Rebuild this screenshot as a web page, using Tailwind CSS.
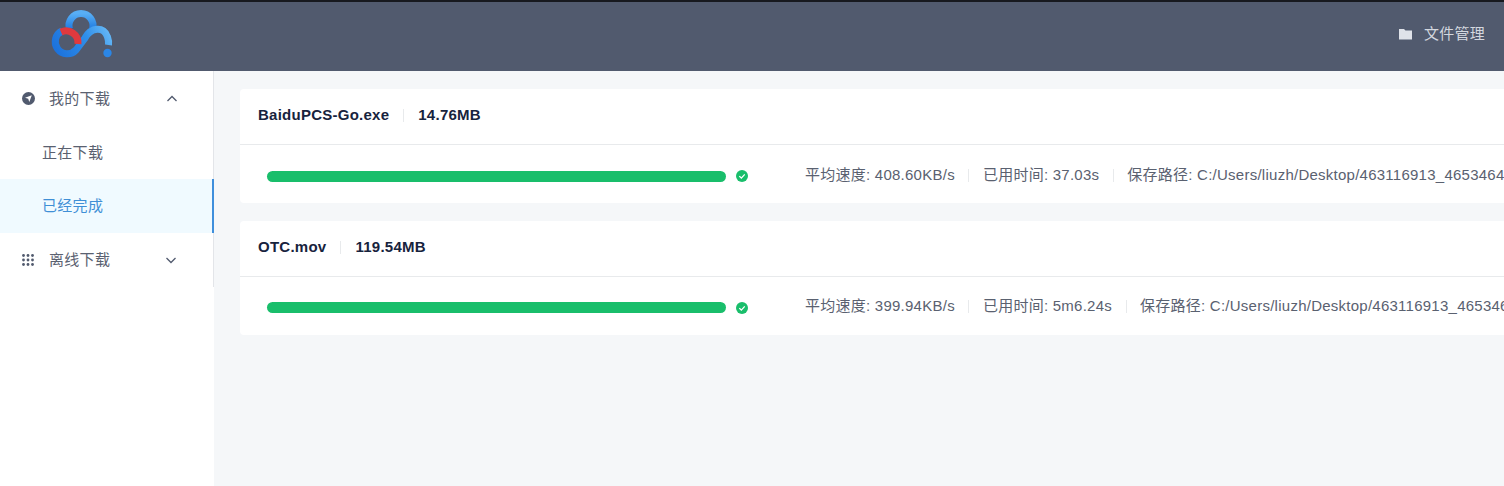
<!DOCTYPE html>
<html lang="zh-CN">

<head>
    <meta charset="UTF-8">
    <title>文件管理</title>
    <script src="https://cdn.jsdelivr.net/npm/@tailwindcss/browser@4"></script>
</head>

<body class="h-[486px] w-[1504px] overflow-hidden bg-white font-['Liberation_Sans','Noto_Sans_CJK_SC',sans-serif] text-[15px] text-[#5a6170]">
    <!-- Header -->
    <header class="flex h-[71px] items-center justify-between border-t-2 border-[#17191f] bg-[#515a6e] pr-[19px]">
        <svg class="ml-[50px] h-[69px] w-[64px]" viewBox="50 2 64 69" fill="none">
            <defs>
                <linearGradient id="logoBlue" x1="0" y1="0" x2="0" y2="1">
                    <stop offset="0" stop-color="#58aef5" />
                    <stop offset="1" stop-color="#1f7be0" />
                </linearGradient>
                <linearGradient id="logoSwoosh" gradientUnits="userSpaceOnUse" x1="58" y1="56" x2="108" y2="28">
                    <stop offset="0" stop-color="#1c72dc" />
                    <stop offset="0.6" stop-color="#2f8fea" />
                    <stop offset="1" stop-color="#66b8f6" />
                </linearGradient>
            </defs>
            <path d="M69.500 29 A12 12 0 1 1 92.500 29" stroke="url(#logoBlue)" stroke-width="7" />
            <path d="M62 31 A12 12 0 1 0 76 50 L85 38 C91 27 104 26 107.500 37 Q109 41 108.500 45" stroke="url(#logoSwoosh)" stroke-width="7" />
            <path d="M61 32 A12 12 0 0 1 78 44" stroke="#e0393e" stroke-width="7" />
            <circle cx="107.500" cy="53" r="4.200" fill="#2b86e6" />
        </svg>
        <div class="mb-[5px] flex items-center text-[#d3d7df]">
            <svg class="mr-[11px] h-[14px] w-[15px]" viewBox="0 0 14 14" fill="#dfe2e9">
                <path d="M0.500 2h5l1.500 1.500h6.500v9H0.500z" />
            </svg>
            <span class="tracking-[0.25px]">文件管理</span>
        </div>
    </header>

    <div class="flex h-[415px]">
        <!-- Sidebar -->
        <aside class="w-[214px] shrink-0 bg-white">
            <div class="border-r border-[#e3e5e9]">
                <div class="flex h-[55px] items-center pl-[22px] pr-[35px]">
                    <svg class="h-[13px] w-[13px]" viewBox="0 0 13 13">
                        <circle cx="6.500" cy="6.500" r="6.500" fill="#515a6e" />
                        <path d="M9.800 3.200 7.300 10 6.200 6.800 3 5.700z" fill="#fff" />
                    </svg>
                    <span class="ml-[14px] mt-[2px] flex-1 tracking-[0.3px]">我的下载</span>
                    <svg class="h-[10px] w-[12px]" viewBox="0 0 12 10" fill="none" stroke="#515a6e" stroke-width="1.300">
                        <path d="M1.500 7 6 2.500 10.500 7" />
                    </svg>
                </div>
                <div class="flex h-[53px] items-center pt-[2px] pl-[42px] tracking-[0.3px]">正在下载</div>
                <div class="-mr-px flex h-[54px] items-center border-r-2 border-[#3f8fdc] bg-[#f0faff] pl-[42px] tracking-[0.3px] text-[#3f8fd6]">已经完成</div>
                <div class="flex h-[54px] items-center pl-[22px] pr-[36px]">
                    <svg class="h-[12px] w-[12px]" viewBox="0 0 12 12" fill="#515a6e">
                        <circle cx="1.500" cy="1.500" r="1.400" />
                        <circle cx="6" cy="1.500" r="1.400" />
                        <circle cx="10.500" cy="1.500" r="1.400" />
                        <circle cx="1.500" cy="6" r="1.400" />
                        <circle cx="6" cy="6" r="1.400" />
                        <circle cx="10.500" cy="6" r="1.400" />
                        <circle cx="1.500" cy="10.500" r="1.400" />
                        <circle cx="6" cy="10.500" r="1.400" />
                        <circle cx="10.500" cy="10.500" r="1.400" />
                    </svg>
                    <span class="ml-[15px] flex-1 tracking-[0.3px]">离线下载</span>
                    <svg class="h-[10px] w-[12px]" viewBox="0 0 12 10" fill="none" stroke="#515a6e" stroke-width="1.300">
                        <path d="M1.500 3 6 7.500 10.500 3" />
                    </svg>
                </div>
            </div>
        </aside>

        <!-- Download list -->
        <main class="flex-1 overflow-hidden bg-[#f5f7f9] pt-[18px] pl-[26px]">
            <section class="mb-[18px] w-[1400px] rounded-[4px] bg-white">
                <div class="flex h-[56px] items-center border-b border-[#e8eaec] pb-[2px] pl-[18px] font-bold tracking-[0.25px] text-[#17233d]">
                    <span>BaiduPCS-Go.exe</span>
                    <span class="mx-[14px] h-[13px] w-px bg-[#e8eaec]"></span>
                    <span>14.76MB</span>
                </div>
                <div class="flex h-[58px] items-center whitespace-nowrap pt-[4px] pl-[27px]">
                    <div class="h-[11px] w-[459px] rounded-full bg-[#19be6b]"></div>
                    <svg class="ml-[10px] h-[12px] w-[12px]" viewBox="0 0 11 11">
                        <circle cx="5.500" cy="5.500" r="5.500" fill="#19be6b" />
                        <path d="M3 5.600 4.900 7.400 8 4" fill="none" stroke="#fff" stroke-width="1.200" />
                    </svg>
                    <div class="ml-[57px] -mt-[1px] flex items-center tracking-[0.25px]">
                        <span>平均速度: 408.60KB/s</span>
                        <span class="mx-[13.5px] h-[13px] w-px bg-[#e8eaec]"></span>
                        <span>已用时间: 37.03s</span>
                        <span class="mx-[13.5px] h-[13px] w-px bg-[#e8eaec]"></span>
                        <span>保存路径: C:/Users/liuzh/Desktop/463116913_46534645</span>
                    </div>
                </div>
            </section>

            <section class="w-[1400px] rounded-[4px] bg-white">
                <div class="flex h-[56px] items-center border-b border-[#e8eaec] pb-[2px] pl-[18px] font-bold tracking-[0.25px] text-[#17233d]">
                    <span>OTC.mov</span>
                    <span class="mx-[14px] h-[13px] w-px bg-[#e8eaec]"></span>
                    <span>119.54MB</span>
                </div>
                <div class="flex h-[58px] items-center whitespace-nowrap pt-[3px] pl-[27px]">
                    <div class="h-[11px] w-[459px] rounded-full bg-[#19be6b]"></div>
                    <svg class="ml-[10px] h-[12px] w-[12px]" viewBox="0 0 11 11">
                        <circle cx="5.500" cy="5.500" r="5.500" fill="#19be6b" />
                        <path d="M3 5.600 4.900 7.400 8 4" fill="none" stroke="#fff" stroke-width="1.200" />
                    </svg>
                    <div class="ml-[57px] -mt-[3px] flex items-center tracking-[0.25px]">
                        <span>平均速度: 399.94KB/s</span>
                        <span class="mx-[13.5px] h-[13px] w-px bg-[#e8eaec]"></span>
                        <span>已用时间: 5m6.24s</span>
                        <span class="mx-[13.5px] h-[13px] w-px bg-[#e8eaec]"></span>
                        <span>保存路径: C:/Users/liuzh/Desktop/463116913_465346</span>
                    </div>
                </div>
            </section>
        </main>
    </div>
</body>

</html>
